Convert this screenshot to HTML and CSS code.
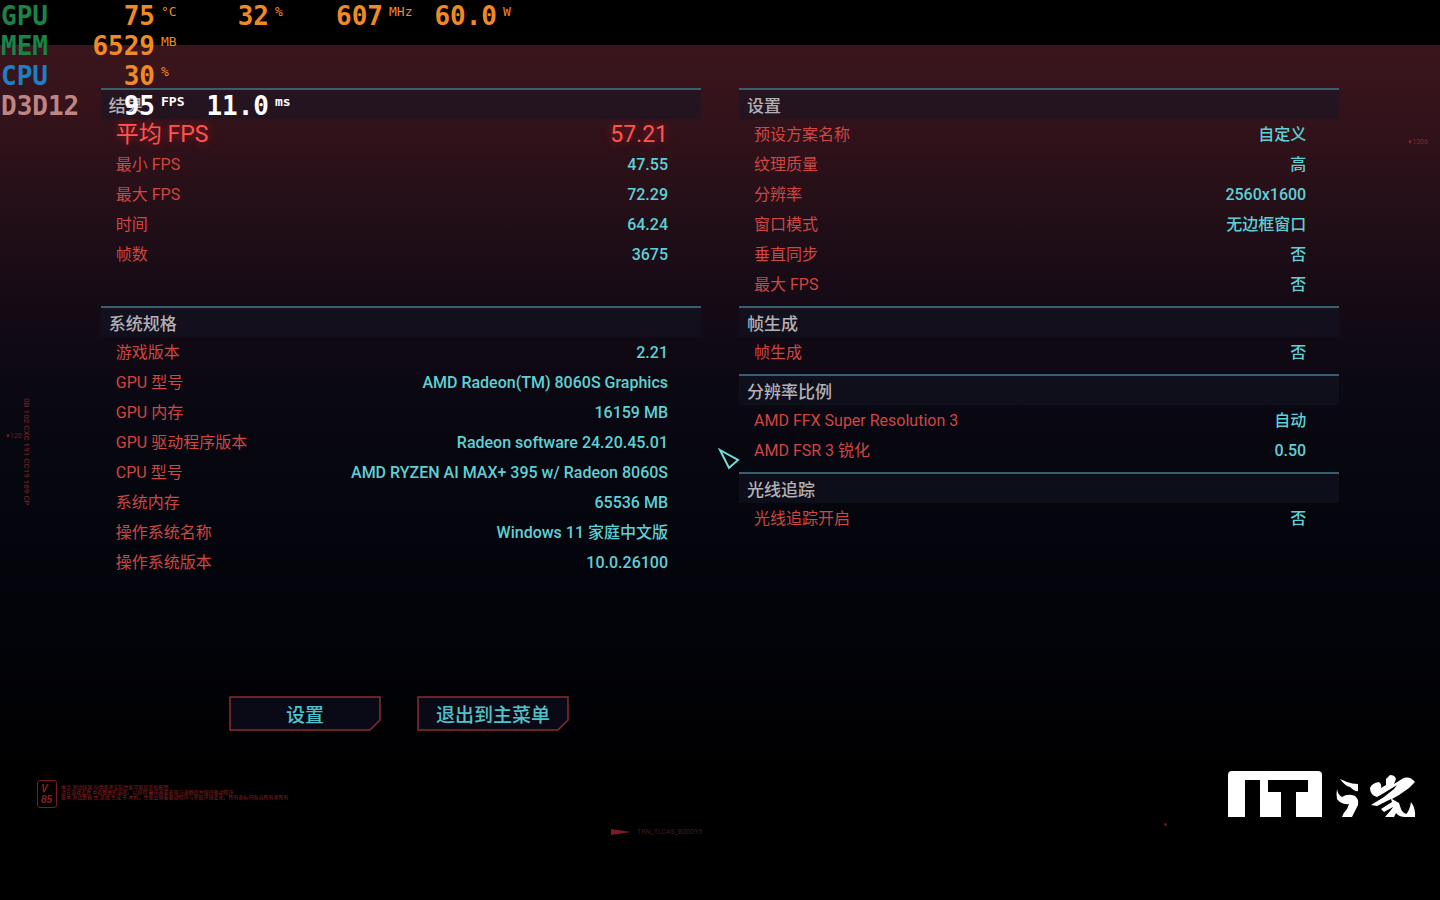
FILE: index.html
```html
<!DOCTYPE html>
<html lang="zh-CN">
<head>
  <meta charset="UTF-8" />
  <meta name="viewport" content="width=device-width, initial-scale=1.0" />
  <title>基准测试结果</title>
  <link rel="stylesheet" href="styles.css">
</head>
<body>
  <div class="top-bar"></div>

  <main class="screen">
    <div class="panels">
      <section class="panel">
        <h2>结果</h2>
        <table>
          <tr class="average"><th scope="row">平均 FPS</th><td>57.21</td></tr>
          <tr><th scope="row">最小 FPS</th><td>47.55</td></tr>
          <tr><th scope="row">最大 FPS</th><td>72.29</td></tr>
          <tr><th scope="row">时间</th><td>64.24</td></tr>
          <tr><th scope="row">帧数</th><td>3675</td></tr>
        </table>
      </section>

      <section class="panel">
        <h2>设置</h2>
        <table>
          <tr><th scope="row">预设方案名称</th><td>自定义</td></tr>
          <tr><th scope="row">纹理质量</th><td>高</td></tr>
          <tr><th scope="row">分辨率</th><td>2560x1600</td></tr>
          <tr><th scope="row">窗口模式</th><td>无边框窗口</td></tr>
          <tr><th scope="row">垂直同步</th><td>否</td></tr>
          <tr><th scope="row">最大 FPS</th><td>否</td></tr>
        </table>
      </section>

      <section class="panel">
        <h2>系统规格</h2>
        <table>
          <tr><th scope="row">游戏版本</th><td>2.21</td></tr>
          <tr><th scope="row">GPU 型号</th><td>AMD Radeon(TM) 8060S Graphics</td></tr>
          <tr><th scope="row">GPU 内存</th><td>16159 MB</td></tr>
          <tr><th scope="row">GPU 驱动程序版本</th><td>Radeon software 24.20.45.01</td></tr>
          <tr><th scope="row">CPU 型号</th><td>AMD RYZEN AI MAX+ 395 w/ Radeon 8060S</td></tr>
          <tr><th scope="row">系统内存</th><td>65536 MB</td></tr>
          <tr><th scope="row">操作系统名称</th><td>Windows 11 家庭中文版</td></tr>
          <tr><th scope="row">操作系统版本</th><td>10.0.26100</td></tr>
        </table>
      </section>

      <div class="stack">
        <section class="panel">
          <h2>帧生成</h2>
          <table>
            <tr><th scope="row">帧生成</th><td>否</td></tr>
          </table>
        </section>
        <section class="panel">
          <h2>分辨率比例</h2>
          <table>
            <tr><th scope="row">AMD FFX Super Resolution 3</th><td>自动</td></tr>
            <tr><th scope="row">AMD FSR 3 锐化</th><td>0.50</td></tr>
          </table>
        </section>
        <section class="panel">
          <h2>光线追踪</h2>
          <table>
            <tr><th scope="row">光线追踪开启</th><td>否</td></tr>
          </table>
        </section>
      </div>

      <div class="actions">
        <button type="button" class="btn">
          <svg class="btn-frame" viewBox="0 0 152 35" preserveAspectRatio="none" aria-hidden="true"><path d="M1 1H151V24L141 34H1Z"/></svg>
          <span>设置</span>
        </button>
        <button type="button" class="btn">
          <svg class="btn-frame" viewBox="0 0 152 35" preserveAspectRatio="none" aria-hidden="true"><path d="M1 1H151V24L141 34H1Z"/></svg>
          <span>退出到主菜单</span>
        </button>
      </div>
    </div>
  </main>

  <footer class="footer">
    <div class="version">
      <div class="version-badge"><span>V</span><span>85</span></div>
      <p class="fine-print">本次 测试结果 仅供参考实际性能可能因系统配置<br>请在游戏设置 中调整图形选项，以获得 最佳画面表现与流畅度并保持驱动程序<br>版本 测试数据 由 游戏 生成 于 本机，性能会随着驱动程序与系统环境变化，所有商标归各自所有者所有</p>
    </div>
    <svg class="logo" viewBox="0 0 188 46" role="img" aria-label="IT之家">
      <path fill-rule="evenodd" d="M4 0H90Q94 0 94 4V46H68V21H80V9H40V21H53V46H32V9H17V46H0V4Q0 0 4 0Z"/>
      <path d="M112 8L119 11Q124 13 130 13V20Q127 21 122 16Q117 15 112 8ZM109 18Q110 24 114 26Q120 22 127 25Q131 28 130 34Q127 40 124 46H114Q115 42 119 38L121 33Q113 34 109 28Q108 23 109 18Z"/>
      <path d="M162 4Q167 4 168 8L166 13L174 8Q181 4 187 11L181 17L171 24L164 28L171 32L173 38Q175 43 180 43L177 46Q171 46 168 42L166 46H157L163 39L165 36L156 41L153 38L164 31L163 28L149 35L143 34L156 26L166 18L169 14L156 22L149 26Q142 24 142 17Q144 12 151 11Q154 13 153 17L158 14L158 8ZM183 31Q188 38 187 46H176Q182 40 183 31Z"/>
    </svg>
  </footer>

  <!-- 画面装饰 -->
  <div class="deco side-code">0B 102 CXC 191 CC19 169 CP</div>
  <div class="deco side-tag">▾120</div>
  <div class="deco right-tag">▾1206</div>
  <div class="deco bottom-code">
    <svg width="20" height="6" viewBox="0 0 20 6" aria-hidden="true"><path d="M0 0L20 3L0 6Z"/></svg>
    <span>TRN_TLCAS_B00095</span>
  </div>
  <div class="deco red-dot"></div>

  <!-- 性能监控 -->
  <table class="hud">
    <colgroup>
      <col class="name"><col class="num"><col class="unit"><col class="num"><col class="unit"><col class="num"><col class="unit"><col class="num"><col class="unit">
    </colgroup>
    <tr class="gpu"><th scope="row">GPU</th><td>75</td><td class="unit">°C</td><td>32</td><td class="unit">%</td><td>607</td><td class="unit">MHz</td><td>60.0</td><td class="unit">W</td></tr>
    <tr class="gpu"><th scope="row">MEM</th><td>6529</td><td class="unit">MB</td></tr>
    <tr class="cpu"><th scope="row">CPU</th><td>30</td><td class="unit">%</td></tr>
    <tr class="api"><th scope="row">D3D12</th><td>95</td><td class="unit">FPS</td><td>11.0</td><td class="unit">ms</td></tr>
  </table>

  <svg class="cursor" width="22" height="24" viewBox="0 0 22 24" aria-hidden="true"><path d="M2 2L20 12L11 20Z"/></svg>
</body>
</html>
```
FILE: styles.css
```css
html {
  background: #000;
}

body {
  position: relative;
  margin: 0;
  min-height: 100vh;
  box-sizing: border-box;
  overflow-x: hidden;
  font-family: Roboto, "Noto Sans CJK SC", sans-serif;
  font-size: 16px;
  color: #5fd0d6;
  background: linear-gradient(#3b151c 45px, #32121a 130px, #200e17 230px, #140a15 310px, #0a0812 400px, #05060e 500px, #03040a 620px, #000 780px);
}

.top-bar {
  height: 45px;
  background: #000;
}

.screen {
  padding: 43px 7% 0;
}

.panels {
  display: grid;
  grid-template-columns: 1fr 1fr;
  gap: 7px 38px;
}

.stack {
  display: flex;
  flex-direction: column;
  gap: 7px;
}

.panel h2 {
  margin: 0;
  padding-left: 8px;
  height: 29px;
  line-height: 32px;
  border-top: 2px solid #37606c;
  background: rgba(20, 22, 38, 0.5);
  font-size: 17px;
  font-weight: 500;
  color: #b4b1b5;
}

.panel table {
  width: 100%;
  border-collapse: collapse;
}

.panel th,
.panel td {
  height: 28px;
  padding: 2px 0 0;
  line-height: 28px;
  white-space: nowrap;
}

.panel th {
  padding-left: 15px;
  text-align: left;
  font-weight: 400;
  color: #cf4642;
}

.panel td {
  padding-right: 33px;
  text-align: right;
  font-weight: 500;
}

.panel .average th,
.panel .average td {
  font-size: 23px;
  font-weight: 400;
  color: #ff5450;
  text-shadow: 0 0 10px rgba(255, 40, 40, 0.5);
}

.actions {
  display: flex;
  justify-content: center;
  gap: 36px;
  margin-top: 112px;
  padding-right: 4px;
}

.btn {
  position: relative;
  min-width: 152px;
  height: 35px;
  padding: 0 16px;
  border: 0;
  background: none;
  font: 500 19px Roboto, "Noto Sans CJK SC", sans-serif;
  color: #4fc3cb;
  cursor: pointer;
}

.btn span {
  position: relative;
}

.btn-frame {
  position: absolute;
  top: 0;
  left: 0;
  width: 100%;
  height: 100%;
  fill: #090a15;
  stroke: #8a2b33;
  stroke-width: 1.5;
}

.btn:hover .btn-frame {
  fill: #1c1020;
}

.footer {
  display: flex;
  justify-content: space-between;
  align-items: flex-start;
  padding: 40px 24px 0 37px;
}

.version {
  display: flex;
  gap: 4px;
  margin-top: 9px;
  color: #8a2023;
}

.version-badge {
  display: flex;
  flex-direction: column;
  box-sizing: border-box;
  width: 20px;
  height: 28px;
  padding: 2px 3px;
  border: 1px solid #7c1c1f;
  border-radius: 3px;
  font: italic 700 10px/11px "Liberation Sans", sans-serif;
}

.fine-print {
  margin: 5px 0 0;
  font-size: 5px;
  line-height: 5px;
}

.logo {
  width: 188px;
  height: 46px;
  fill: #fff;
}

.deco {
  position: absolute;
  font-size: 7px;
  line-height: 8px;
  color: #6e1e27;
}

.side-code {
  top: 398px;
  left: 22px;
  font-size: 8px;
  font-weight: 500;
  writing-mode: vertical-rl;
}

.side-tag {
  top: 432px;
  left: 6px;
}

.right-tag {
  top: 138px;
  right: 12px;
  color: #8c252b;
}

.bottom-code {
  top: 828px;
  left: 611px;
  display: flex;
  align-items: center;
  gap: 6px;
  color: #4c1519;
}

.bottom-code svg {
  fill: #7c1d23;
}

.red-dot {
  top: 823px;
  left: 1164px;
  width: 3px;
  height: 3px;
  border-radius: 50%;
  background: #7a1218;
}

.hud {
  position: absolute;
  top: 1px;
  left: 0;
  width: 530px;
  table-layout: fixed;
  border-collapse: collapse;
  font-family: "DejaVu Sans Mono", monospace;
  font-size: 26px;
  color: #f08a24;
}

.hud col.name {
  width: 90px;
}

.hud col.num {
  width: 65px;
}

.hud col.unit {
  width: 49px;
}

.hud th,
.hud td {
  height: 30px;
  padding: 0;
  line-height: 30px;
  font-weight: 700;
  text-align: right;
  white-space: nowrap;
}

.hud th {
  padding-left: 1px;
  text-align: left;
}

.hud td.unit {
  padding-left: 6px;
  font-size: 13px;
  font-weight: 400;
  line-height: 22px;
  vertical-align: top;
  text-align: left;
}

.gpu th {
  color: #1b8248;
}

.cpu th {
  color: #1e7fc4;
}

.hud .api th {
  color: #bf8585;
}

.hud .api td {
  font-weight: 700;
  color: #fff;
}

.cursor {
  position: absolute;
  top: 448px;
  left: 718px;
  fill: #05060e;
  stroke: #6fe0dc;
  stroke-width: 2;
}
```
